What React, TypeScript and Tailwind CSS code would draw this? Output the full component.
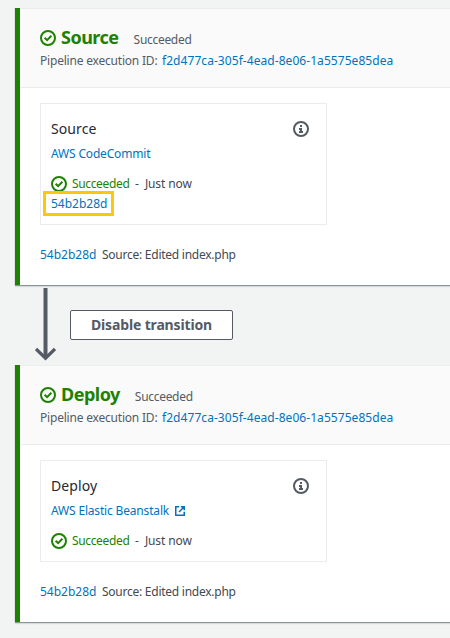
import type { ReactNode } from "react";

function CheckCircle() {
  return (
    <svg viewBox="0 0 16 16" className="block size-4 shrink-0" fill="none" stroke="#1d8102" strokeWidth="2">
      <circle cx="8" cy="8" r="7" />
      <path d="M4.6 7.7 7.1 10.2 11.4 5.8" />
    </svg>
  );
}

function InfoCircle() {
  return (
    <svg viewBox="0 0 16 16" className="block size-4 shrink-0" fill="none" stroke="#545b64" strokeWidth="2">
      <circle cx="8" cy="8" r="7" />
      <path d="M7 4h2v2H7zM6 7h3v3h1v2H6v-2h1V9H6z" fill="#545b64" stroke="none" />
    </svg>
  );
}

function ExternalIcon() {
  return (
    <svg viewBox="0 0 10 10" className="block size-[10px] shrink-0" fill="none" stroke="#0073bb" strokeWidth="1.5">
      <path d="M4.2.75H.75v8.5h8.5V5.8M5.8.75h3.45V4.2M9.25.75 4 6" />
    </svg>
  );
}

type StageProps = {
  title: string;
  provider: ReactNode;
  revision?: string;
};

function Stage({ title, provider, revision }: StageProps) {
  return (
    <section className="ml-[15px] flex flex-col border-l-[5px] border-[#1d8102] bg-white shadow-[0_1px_0_0_#879596,0_2px_1px_0_#d5dbdb,-1px_0_0_0_#dfe5e6]">
      <header className="flex h-20 flex-col border-y border-[#eaeded] bg-[#fafafa] pl-5 pt-[17px]">
        <div className="flex h-6 items-center">
          <CheckCircle />
          <h2 className="-mt-0.5 ml-[5px] text-[18px] font-bold leading-6 tracking-[-0.5px] text-[#1d8102]">{title}</h2>
          <span className="ml-[15px] pt-1 text-[12px] leading-5 tracking-[-0.3px] text-[#545b64]">Succeeded</span>
        </div>
        <div className="mt-px flex h-5 items-center text-[12px] leading-5">
          <span className="w-[122px] tracking-[-0.2px] text-[#545b64]">Pipeline execution ID:</span>
          <a className="tracking-[0.06px] text-[#0073bb]">f2d477ca-305f-4ead-8e06-1a5575e85dea</a>
        </div>
      </header>
      <div className="flex flex-col pl-5 pt-[15px]">
        <div className="flex w-[287px] flex-col border border-[#eaeded] pb-[10px] pl-[10px] pr-[17px] pt-[15px]">
          <div className="flex h-5 items-center justify-between text-[14px] leading-5 tracking-[0.1px] text-[#26292f]">
            <span>{title}</span>
            <InfoCircle />
          </div>
          <div className="mt-[5px] flex h-5 items-center text-[12px] leading-5 tracking-[-0.17px] text-[#0073bb]">{provider}</div>
          <div className="mt-[10px] flex h-5 items-center text-[12px] leading-5">
            <CheckCircle />
            <span className="ml-[5px] w-[57px] tracking-[-0.35px] text-[#1d8102]">Succeeded</span>
            <span className="ml-[6px] text-[#444850]">-</span>
            <span className="ml-[6px] tracking-[-0.1px] text-[#444850]">Just now</span>
          </div>
          {revision && (
            <div className="-mb-[2px] -ml-2 -mt-[3px] flex h-[25px] w-[71px] items-center border-[3px] border-[#ffc60d] pl-[5px] text-[12px] leading-5 text-[#0073bb]">
              {revision}
            </div>
          )}
        </div>
        <div className="mb-5 mt-5 flex h-5 items-center text-[12px] leading-5">
          <a className="w-[62px] text-[#0073bb]">54b2b28d</a>
          <span className="tracking-[-0.25px] text-[#444850]">Source: Edited index.php</span>
        </div>
      </div>
    </section>
  );
}

export default function App() {
  return (
    <main className="h-[638px] w-[450px] overflow-hidden bg-[#f2f3f3] pt-2 font-['Noto_Sans',sans-serif]">
      <Stage title="Source" provider={<a>AWS CodeCommit</a>} revision="54b2b28d" />
      <div className="flex h-20 pl-[35px] pt-[3px]">
        <svg viewBox="0 0 21 74" className="block h-[74px] w-[21px]" fill="none" stroke="#545b64">
          <path d="M10.5 0v70" strokeWidth="4" />
          <path d="M1 61 10.5 70.3 20 61" strokeWidth="3.3" />
        </svg>
        <button className="ml-[14px] mt-[22px] h-[30px] w-[163px] rounded-[2px] border border-[#545b64] bg-white text-[14px] font-bold leading-5 tracking-[-0.15px] text-[#545b64]">
          Disable transition
        </button>
      </div>
      <Stage
        title="Deploy"
        provider={
          <a className="flex items-center gap-[6px]">
            AWS Elastic Beanstalk <ExternalIcon />
          </a>
        }
      />
    </main>
  );
}
